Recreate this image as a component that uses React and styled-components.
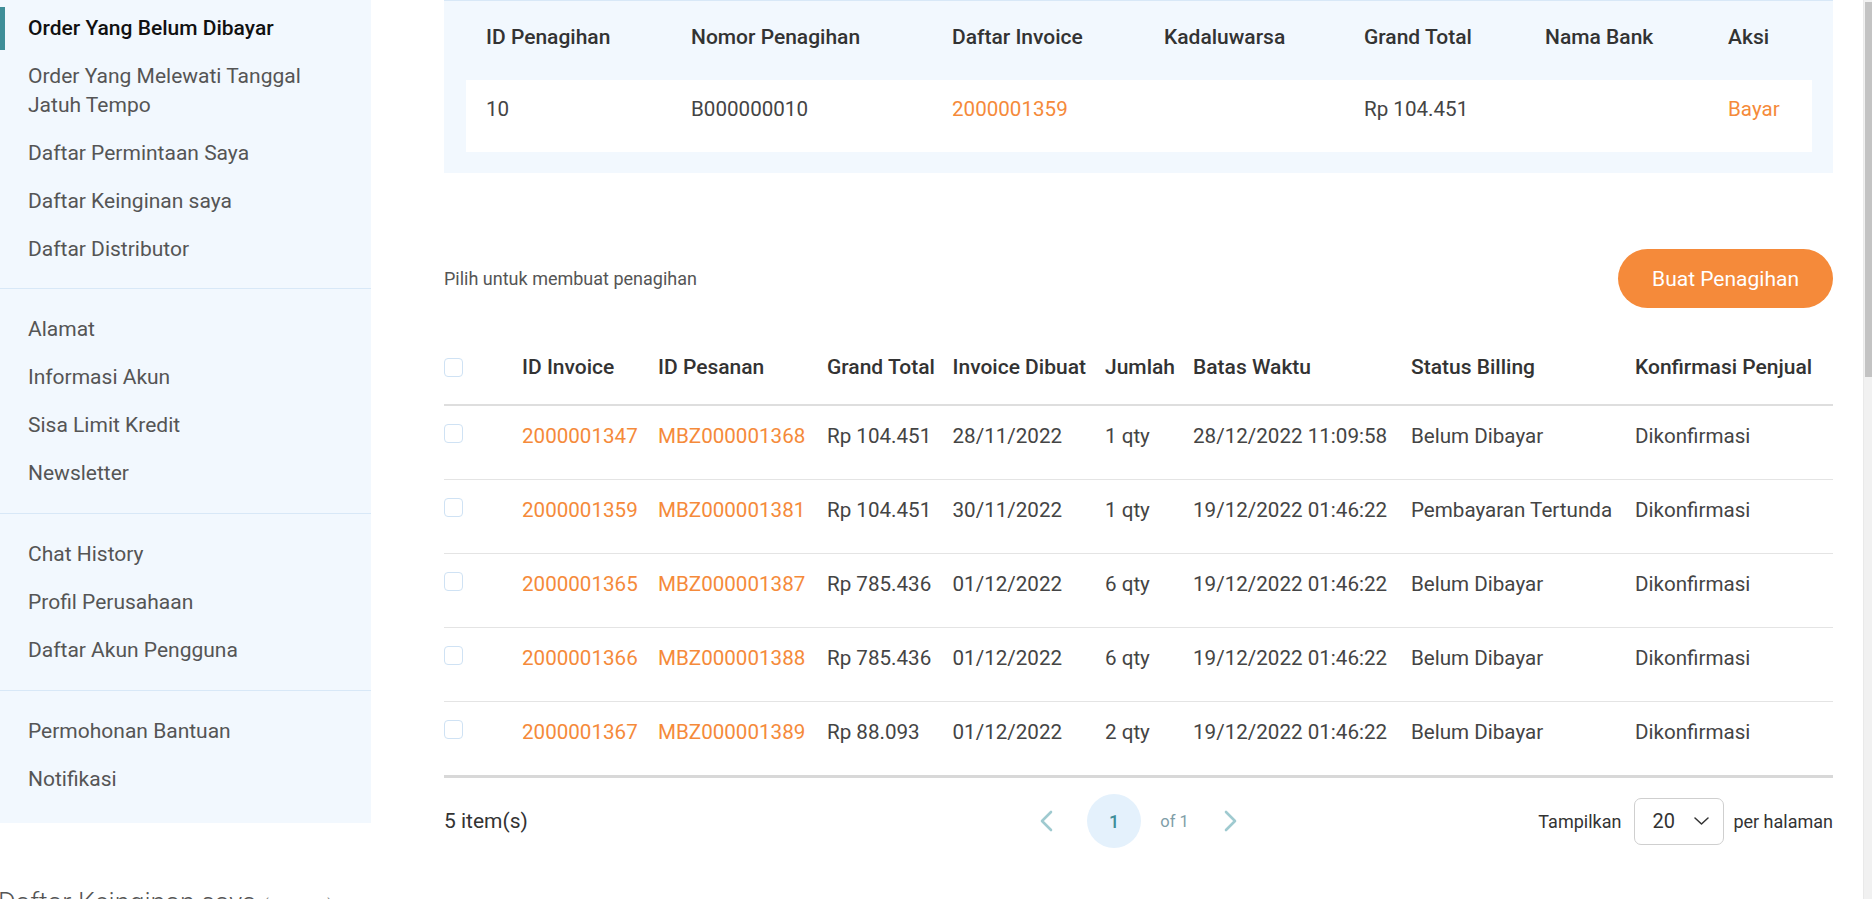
import React from "react";
import styled, { createGlobalStyle } from "styled-components";

const GlobalStyle = createGlobalStyle`
  html, body {
    margin: 0;
    padding: 0;
    background: #fff;
  }
  body {
    font-family: Roboto, "Noto Sans", "Liberation Sans", sans-serif;
    color: #444;
  }
  * {
    box-sizing: border-box;
  }
`;

const ORANGE = "#f58a3a";
const TEAL = "#3f8e98";
const PALE = "#f2f8fe";
const LINE_BLUE = "#d8e8f7";

const menuGroups = [
  [
    { label: "Order Yang Belum Dibayar", active: true },
    { label: "Order Yang Melewati Tanggal Jatuh Tempo" },
    { label: "Daftar Permintaan Saya" },
    { label: "Daftar Keinginan saya" },
    { label: "Daftar Distributor" }
  ],
  [
    { label: "Alamat" },
    { label: "Informasi Akun" },
    { label: "Sisa Limit Kredit" },
    { label: "Newsletter" }
  ],
  [
    { label: "Chat History" },
    { label: "Profil Perusahaan" },
    { label: "Daftar Akun Pengguna" }
  ],
  [{ label: "Permohonan Bantuan" }, { label: "Notifikasi" }]
];

const invoices = [
  ["2000001347", "MBZ000001368", "Rp 104.451", "28/11/2022", "1 qty", "28/12/2022 11:09:58", "Belum Dibayar", "Dikonfirmasi"],
  ["2000001359", "MBZ000001381", "Rp 104.451", "30/11/2022", "1 qty", "19/12/2022 01:46:22", "Pembayaran Tertunda", "Dikonfirmasi"],
  ["2000001365", "MBZ000001387", "Rp 785.436", "01/12/2022", "6 qty", "19/12/2022 01:46:22", "Belum Dibayar", "Dikonfirmasi"],
  ["2000001366", "MBZ000001388", "Rp 785.436", "01/12/2022", "6 qty", "19/12/2022 01:46:22", "Belum Dibayar", "Dikonfirmasi"],
  ["2000001367", "MBZ000001389", "Rp 88.093", "01/12/2022", "2 qty", "19/12/2022 01:46:22", "Belum Dibayar", "Dikonfirmasi"]
];

/* ---------- layout ---------- */

const Layout = styled.div`
  display: flex;
  align-items: flex-start;
`;

const Sidebar = styled.nav`
  flex: 0 0 371px;
  background: ${PALE};
`;

const MenuGroup = styled.div`
  padding: ${({ $first }) => ($first ? "4px" : "16px")} 0
    ${({ $last, $first }) => ($last ? "20px" : $first ? "15px" : "16px")};
  border-top: ${({ $first }) => ($first ? "none" : `1px solid ${LINE_BLUE}`)};
`;

const MenuItem = styled.a`
  position: relative;
  display: block;
  padding: 9.5px 28px;
  font-size: 21px;
  line-height: 29px;
  color: ${({ $active }) => ($active ? "#111" : "#555")};
  font-weight: ${({ $active }) => ($active ? 500 : 400)};
  text-decoration: none;
  cursor: pointer;

  &::before {
    content: "";
    display: ${({ $active }) => ($active ? "block" : "none")};
    position: absolute;
    left: 0;
    top: 3px;
    bottom: 2px;
    width: 5px;
    background: ${TEAL};
  }
`;

const Main = styled.main`
  flex: 0 0 1389px;
  margin-left: 73px;
`;

/* ---------- billing panel ---------- */

const BillPanel = styled.section`
  background: ${PALE};
  border-top: 1px solid ${LINE_BLUE};
  padding: 0 21px 21px 22px;
`;

const BillGrid = styled.div`
  display: grid;
  grid-template-columns: 205px 261px 212px 200px 181px 183px 1fr;
  padding: 0 20px;
  line-height: 24px;
`;

const BillHead = styled(BillGrid)`
  height: 79px;
  padding-top: 24px;
  font-size: 21px;
  font-weight: 500;
  color: #333;
`;

const BillRow = styled(BillGrid)`
  height: 72px;
  padding-top: 17px;
  background: #fff;
  font-size: 20.6px;
  color: #444;
`;

const Link = styled.a`
  color: ${ORANGE};
  text-decoration: none;
  cursor: pointer;
`;

/* ---------- invoices ---------- */

const Toolbar = styled.div`
  display: flex;
  align-items: center;
  justify-content: space-between;
  margin-top: 76px;
`;

const Hint = styled.span`
  font-size: 18px;
  color: #555;
`;

const PrimaryButton = styled.button`
  height: 59px;
  padding: 0 34px;
  border: none;
  border-radius: 30px;
  background: ${ORANGE};
  color: #fff;
  font-family: inherit;
  font-size: 21px;
  cursor: pointer;
`;

const InvGrid = styled.div`
  display: grid;
  grid-template-columns: 78px 136px 169px 125.5px 152.5px 88px 218px 224px 1fr;
  line-height: 24px;
`;

const InvHead = styled(InvGrid)`
  align-items: center;
  margin-top: 29px;
  padding: 18px 0 25px;
  border-bottom: 2px solid #dedede;
  font-size: 21px;
  font-weight: 500;
  color: #333;
  white-space: nowrap;
`;

const InvRow = styled(InvGrid)`
  align-items: start;
  padding: 18px 0 31px;
  border-bottom: ${({ $last }) => ($last ? "3px solid #d8d8d8" : "1px solid #e4e4e4")};
  font-size: 20.6px;
  color: #444;
  white-space: nowrap;
`;

const Check = styled.span`
  display: block;
  width: 19px;
  height: 19px;
  border: 1px solid #cfe2f4;
  border-radius: 4px;
  background: #fff;
`;

/* ---------- footer ---------- */

const Footer = styled.div`
  display: grid;
  grid-template-columns: 1fr auto 1fr;
  align-items: center;
  height: 54px;
  margin-top: 16px;
`;

const Count = styled.span`
  font-size: 21px;
  color: #333;
`;

const Pager = styled.div`
  display: flex;
  align-items: center;
`;

const PagerArrow = styled.button`
  display: flex;
  padding: 0;
  border: none;
  background: none;
  color: #9fcad0;
  cursor: pointer;
`;

const PageBubble = styled.span`
  display: flex;
  align-items: center;
  justify-content: center;
  width: 54px;
  height: 54px;
  margin: 0 19px 0 34px;
  border-radius: 50%;
  background: #e4f1fc;
  color: ${TEAL};
  font-size: 18px;
  font-weight: 500;
`;

const PageOf = styled.span`
  margin-right: 35px;
  font-size: 16.5px;
  color: #7f9ea8;
`;

const PerPage = styled.div`
  display: flex;
  align-items: center;
  justify-self: end;
  font-size: 18px;
  color: #333;
`;

const Select = styled.div`
  display: flex;
  align-items: center;
  justify-content: space-between;
  width: 90px;
  height: 47px;
  margin: 0 9px 0 13px;
  padding: 0 14px 0 17px;
  border: 1px solid #cfcfcf;
  border-radius: 7px;
  font-size: 20px;
  color: #333;
`;

/* ---------- below the fold ---------- */

const WishTitle = styled.h2`
  margin: 40px 0 0 -2px;
  font-size: 27px;
  line-height: 31px;
  font-weight: 300;
  color: #555;
`;

const WishCount = styled.small`
  font-size: 18px;
  color: #777;
`;

const WishBody = styled.div`
  min-height: 1230px;
`;

/* thin page scrollbar, drawn over the right edge */
const ScrollTrack = styled.div`
  position: fixed;
  top: 0;
  right: 0;
  width: 9px;
  height: 100vh;
  background: #f1f1f1;
  border-left: 1px solid #e9e9e9;
`;

const ScrollThumb = styled.div`
  position: absolute;
  top: 2px;
  left: 1px;
  right: 0;
  height: 375px;
  background: #c3c3c3;
`;

const ChevronLeft = () => (
  <svg width="14" height="22" viewBox="0 0 14 22" fill="none">
    <polyline points="12,2 3,11 12,20" stroke="currentColor" strokeWidth="2.6" strokeLinecap="round" strokeLinejoin="round" />
  </svg>
);

const ChevronRight = () => (
  <svg width="14" height="22" viewBox="0 0 14 22" fill="none">
    <polyline points="2,2 11,11 2,20" stroke="currentColor" strokeWidth="2.6" strokeLinecap="round" strokeLinejoin="round" />
  </svg>
);

const ChevronDown = () => (
  <svg width="15" height="8" viewBox="0 0 15 8" fill="none">
    <polyline points="1,1 7.5,7 14,1" stroke="#333" strokeWidth="1.5" strokeLinecap="round" strokeLinejoin="round" />
  </svg>
);

const billHeaders = ["ID Penagihan", "Nomor Penagihan", "Daftar Invoice", "Kadaluwarsa", "Grand Total", "Nama Bank", "Aksi"];
const invHeaders = ["ID Invoice", "ID Pesanan", "Grand Total", "Invoice Dibuat", "Jumlah", "Batas Waktu", "Status Billing", "Konfirmasi Penjual"];

export default function App() {
  return (
    <>
      <GlobalStyle />
      <Layout>
        <Sidebar>
          {menuGroups.map((group, gi) => (
            <MenuGroup key={gi} $first={gi === 0} $last={gi === menuGroups.length - 1}>
              {group.map((item) => (
                <MenuItem key={item.label} $active={item.active}>
                  {item.label}
                </MenuItem>
              ))}
            </MenuGroup>
          ))}
        </Sidebar>

        <Main>
          <BillPanel>
            <BillHead>
              {billHeaders.map((h) => (
                <span key={h}>{h}</span>
              ))}
            </BillHead>
            <BillRow>
              <span>10</span>
              <span>B000000010</span>
              <Link>2000001359</Link>
              <span />
              <span>Rp 104.451</span>
              <span />
              <Link>Bayar</Link>
            </BillRow>
          </BillPanel>

          <Toolbar>
            <Hint>Pilih untuk membuat penagihan</Hint>
            <PrimaryButton>Buat Penagihan</PrimaryButton>
          </Toolbar>

          <InvHead>
            <Check />
            {invHeaders.map((h) => (
              <span key={h}>{h}</span>
            ))}
          </InvHead>
          {invoices.map((row, i) => (
            <InvRow key={row[0]} $last={i === invoices.length - 1}>
              <Check />
              <Link>{row[0]}</Link>
              <Link>{row[1]}</Link>
              {row.slice(2).map((cell, ci) => (
                <span key={ci}>{cell}</span>
              ))}
            </InvRow>
          ))}

          <Footer>
            <Count>5 item(s)</Count>
            <Pager>
              <PagerArrow aria-label="Sebelumnya">
                <ChevronLeft />
              </PagerArrow>
              <PageBubble>1</PageBubble>
              <PageOf>of 1</PageOf>
              <PagerArrow aria-label="Berikutnya">
                <ChevronRight />
              </PagerArrow>
            </Pager>
            <PerPage>
              Tampilkan
              <Select>
                20
                <ChevronDown />
              </Select>
              per halaman
            </PerPage>
          </Footer>
        </Main>
      </Layout>

      <WishTitle>
        Daftar Keinginan saya <WishCount>(8 items)</WishCount>
      </WishTitle>
      <WishBody />

      <ScrollTrack>
        <ScrollThumb />
      </ScrollTrack>
    </>
  );
}
